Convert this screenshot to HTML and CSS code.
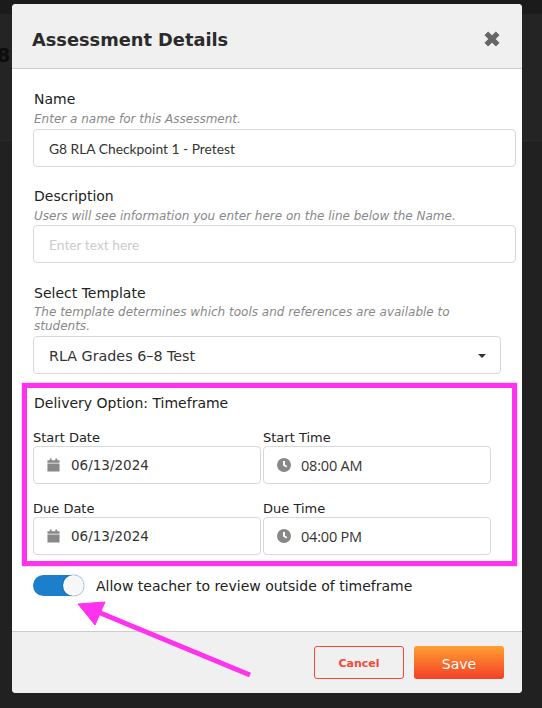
FILE: index.html
```html
<!DOCTYPE html>
<html lang="en">
<head>
  <meta charset="UTF-8" />
  <title>Assessment Details</title>
  <link rel="stylesheet" href="styles.css">
</head>
<body>
  <div class="backdrop-text">8</div>
  <div class="modal">
    <header class="modal-header">
      <h2>Assessment Details</h2>
      <svg class="close" viewBox="0 0 16 16" width="16" height="16"><path d="M1 4.2 4.2 1 8 4.8 11.8 1 15 4.2 11.2 8 15 11.8 11.8 15 8 11.2 4.2 15 1 11.8 4.8 8Z" fill="#666" stroke="#666" stroke-linejoin="round"/></svg>
    </header>

    <div class="modal-body">
      <div class="field field-name">
        <label>Name</label>
        <p class="hint">Enter a name for this Assessment.</p>
        <div class="input">G8 RLA Checkpoint 1 - Pretest</div>
      </div>

      <div class="field field-desc">
        <label>Description</label>
        <p class="hint">Users will see information you enter here on the line below the Name.</p>
        <div class="input placeholder">Enter text here</div>
      </div>

      <div class="field field-template">
        <label>Select Template</label>
        <p class="hint">The template determines which tools and references are available to students.</p>
        <div class="input select">
          <span>RLA Grades 6–8 Test</span>
          <span class="caret"></span>
        </div>
      </div>

      <section class="delivery">
        <div class="delivery-title">Delivery Option: Timeframe</div>
        <div class="date-grid">
          <div>
            <label class="small">Start Date</label>
            <div class="input picker">
              <svg viewBox="0 0 14 14" width="13" height="14"><path d="M3 0h2v2h4V0h2v2h2.5v2.5H.5V2H3ZM.5 5.5h13V14H.5Z" fill="#888"/></svg>
              <span class="date">06/13/2024</span>
            </div>
          </div>
          <div>
            <label class="small">Start Time</label>
            <div class="input picker">
              <svg viewBox="0 0 14 14" width="14" height="14"><path d="M7 0a7 7 0 1 1 0 14A7 7 0 0 1 7 0ZM6 3v4.5l3.4 2 .9-1.4L8 6.8V3Z" fill="#888" fill-rule="evenodd"/></svg>
              <span class="time">08:00 AM</span>
            </div>
          </div>
          <div>
            <label class="small">Due Date</label>
            <div class="input picker">
              <svg viewBox="0 0 14 14" width="13" height="14"><path d="M3 0h2v2h4V0h2v2h2.5v2.5H.5V2H3ZM.5 5.5h13V14H.5Z" fill="#888"/></svg>
              <span class="date">06/13/2024</span>
            </div>
          </div>
          <div>
            <label class="small">Due Time</label>
            <div class="input picker">
              <svg viewBox="0 0 14 14" width="14" height="14"><path d="M7 0a7 7 0 1 1 0 14A7 7 0 0 1 7 0ZM6 3v4.5l3.4 2 .9-1.4L8 6.8V3Z" fill="#888" fill-rule="evenodd"/></svg>
              <span class="time">04:00 PM</span>
            </div>
          </div>
        </div>
      </section>

      <div class="toggle-row">
        <span class="toggle"><span class="knob"></span></span>
        <span>Allow teacher to review outside of timeframe</span>
      </div>
    </div>

    <footer class="modal-footer">
      <button class="btn-cancel">Cancel</button>
      <button class="btn-save">Save</button>
    </footer>
  </div>

  <!-- annotation arrow drawn over the screenshot -->
  <svg class="arrow" viewBox="0 0 542 708" width="542" height="708">
    <path d="M250 675 98 612" stroke="#ff33ee" stroke-width="5" fill="none"/>
    <path d="M78 604 105 602 95 625Z" fill="#ff33ee" stroke="#ff33ee" stroke-width="1"/>
  </svg>
</body>
</html>
```

FILE: styles.css
```css
* {
  box-sizing: border-box;
  margin: 0;
  padding: 0;
}

html, body {
  height: 708px;
  overflow: hidden;
}

body {
  position: relative;
  background: linear-gradient(#1b1b1b 14px, #242424 14px, #242424 140px, #2c2c2c 140px, #2c2c2c 141px, #212121 141px);
  font-family: "DejaVu Sans", Verdana, sans-serif;
  color: #222;
  padding: 4px 0 0 12px;
}

.backdrop-text {
  position: absolute;
  left: -3px;
  top: 44px;
  font-size: 19px;
  font-weight: bold;
  color: #0c0c0c;
}

.modal {
  position: relative;
  width: 510px;
  height: 689px;
  background-color: white;
  border-radius: 4px;
  display: flex;
  flex-direction: column;
}

.modal-header {
  height: 65px;
  flex: none;
  padding: 6px 22px 0 20px;
  background-color: #f0f0f0;
  border-bottom: 1px solid #ccc;
  border-radius: 4px 4px 0 0;
  display: flex;
  align-items: center;
  justify-content: space-between;
}

.modal-header h2 {
  font-size: 17.8px;
  font-weight: bold;
  color: #2b2b2b;
}

.modal-body {
  flex: 1;
  padding: 0 6px 0 10px;
}

label {
  display: block;
  font-size: 14px;
  line-height: 17px;
  color: #222;
}

label.small {
  font-size: 13px;
  line-height: 15px;
  margin-bottom: 1px;
}

.hint {
  font-size: 12px;
  font-style: italic;
  line-height: 14px;
  color: #888;
  margin-top: 4px;
  margin-bottom: 3px;
  max-width: 470px;
}

.field {
  padding-left: 11px;
}

.field label {
  padding-left: 1px;
}

.field .hint {
  padding-left: 1px;
}

.field-name {
  margin-top: 22px;
}

.field-desc {
  margin-top: 21px;
}

.field-desc .hint {
  margin-bottom: 2px;
}

.field-template {
  margin-top: 22px;
}

.field-template .hint {
  margin-top: 3px;
}

.input {
  height: 38px;
  border: 1px solid #d8d8d8;
  border-radius: 4px;
  background-color: white;
  padding: 0 15px;
  display: flex;
  align-items: center;
  font-family: Lato, "Open Sans", sans-serif;
  font-size: 13.8px;
  color: #333;
}

.placeholder {
  color: #ccc;
}

.select {
  width: 468px;
  justify-content: space-between;
  padding-top: 1px;
  font-family: "DejaVu Sans", Verdana, sans-serif;
  font-size: 14.3px;
}

.caret {
  border-left: 4px solid transparent;
  border-right: 4px solid transparent;
  border-top: 4px solid #333;
  margin-right: -1px;
}

.delivery {
  width: 495px;
  height: 183px;
  margin-top: 9px;
  border: 5px solid #ff33ee;
  box-shadow: 0 0 1px #ff33ee;
  padding: 7px 6px;
}

.delivery-title {
  font-size: 14px;
  line-height: 17px;
  color: #222;
  padding-left: 1px;
}

.date-grid {
  display: grid;
  grid-template-columns: 228px 228px;
  column-gap: 2px;
  row-gap: 17px;
  margin-top: 18px;
}

.picker {
  gap: 11px;
  padding-left: 13px;
}

.date {
  font-family: "DejaVu Sans", Verdana, sans-serif;
  font-size: 13.5px;
}

.time {
  margin-left: -1px;
  font-family: "Open Sans", sans-serif;
  font-size: 14.5px;
  letter-spacing: -0.2px;
}

.toggle-row {
  display: flex;
  align-items: center;
  gap: 12px;
  margin-top: 9px;
  padding-left: 11px;
  font-size: 14px;
  color: #222;
}

.toggle {
  width: 51px;
  height: 21px;
  border-radius: 11px;
  background-color: #1b7fcc;
  position: relative;
}

.knob {
  position: absolute;
  right: 0;
  top: 0;
  width: 21px;
  height: 21px;
  border-radius: 50%;
  background-color: #f7f7f7;
  box-shadow: 0 0 2px rgba(0, 0, 0, 0.4);
}

.modal-footer {
  height: 62px;
  flex: none;
  padding: 14px 18px 0 0;
  background-color: #f0f0f0;
  border-top: 1px solid #ccc;
  border-radius: 0 0 4px 4px;
  display: flex;
  justify-content: flex-end;
  align-items: flex-start;
  gap: 10px;
}

button {
  width: 90px;
  height: 33px;
  border-radius: 3px;
  font-family: "DejaVu Sans", Verdana, sans-serif;
}

.btn-cancel {
  background-color: transparent;
  border: 1px solid #f44a36;
  color: #f44a36;
  font-size: 11px;
  font-weight: bold;
  padding-top: 1px;
}

.btn-save {
  border: none;
  background: linear-gradient(#ffa030, #f43f26);
  color: white;
  font-size: 14px;
  padding-top: 3px;
}

.arrow {
  position: absolute;
  left: 0;
  top: 0;
  pointer-events: none;
}
```
